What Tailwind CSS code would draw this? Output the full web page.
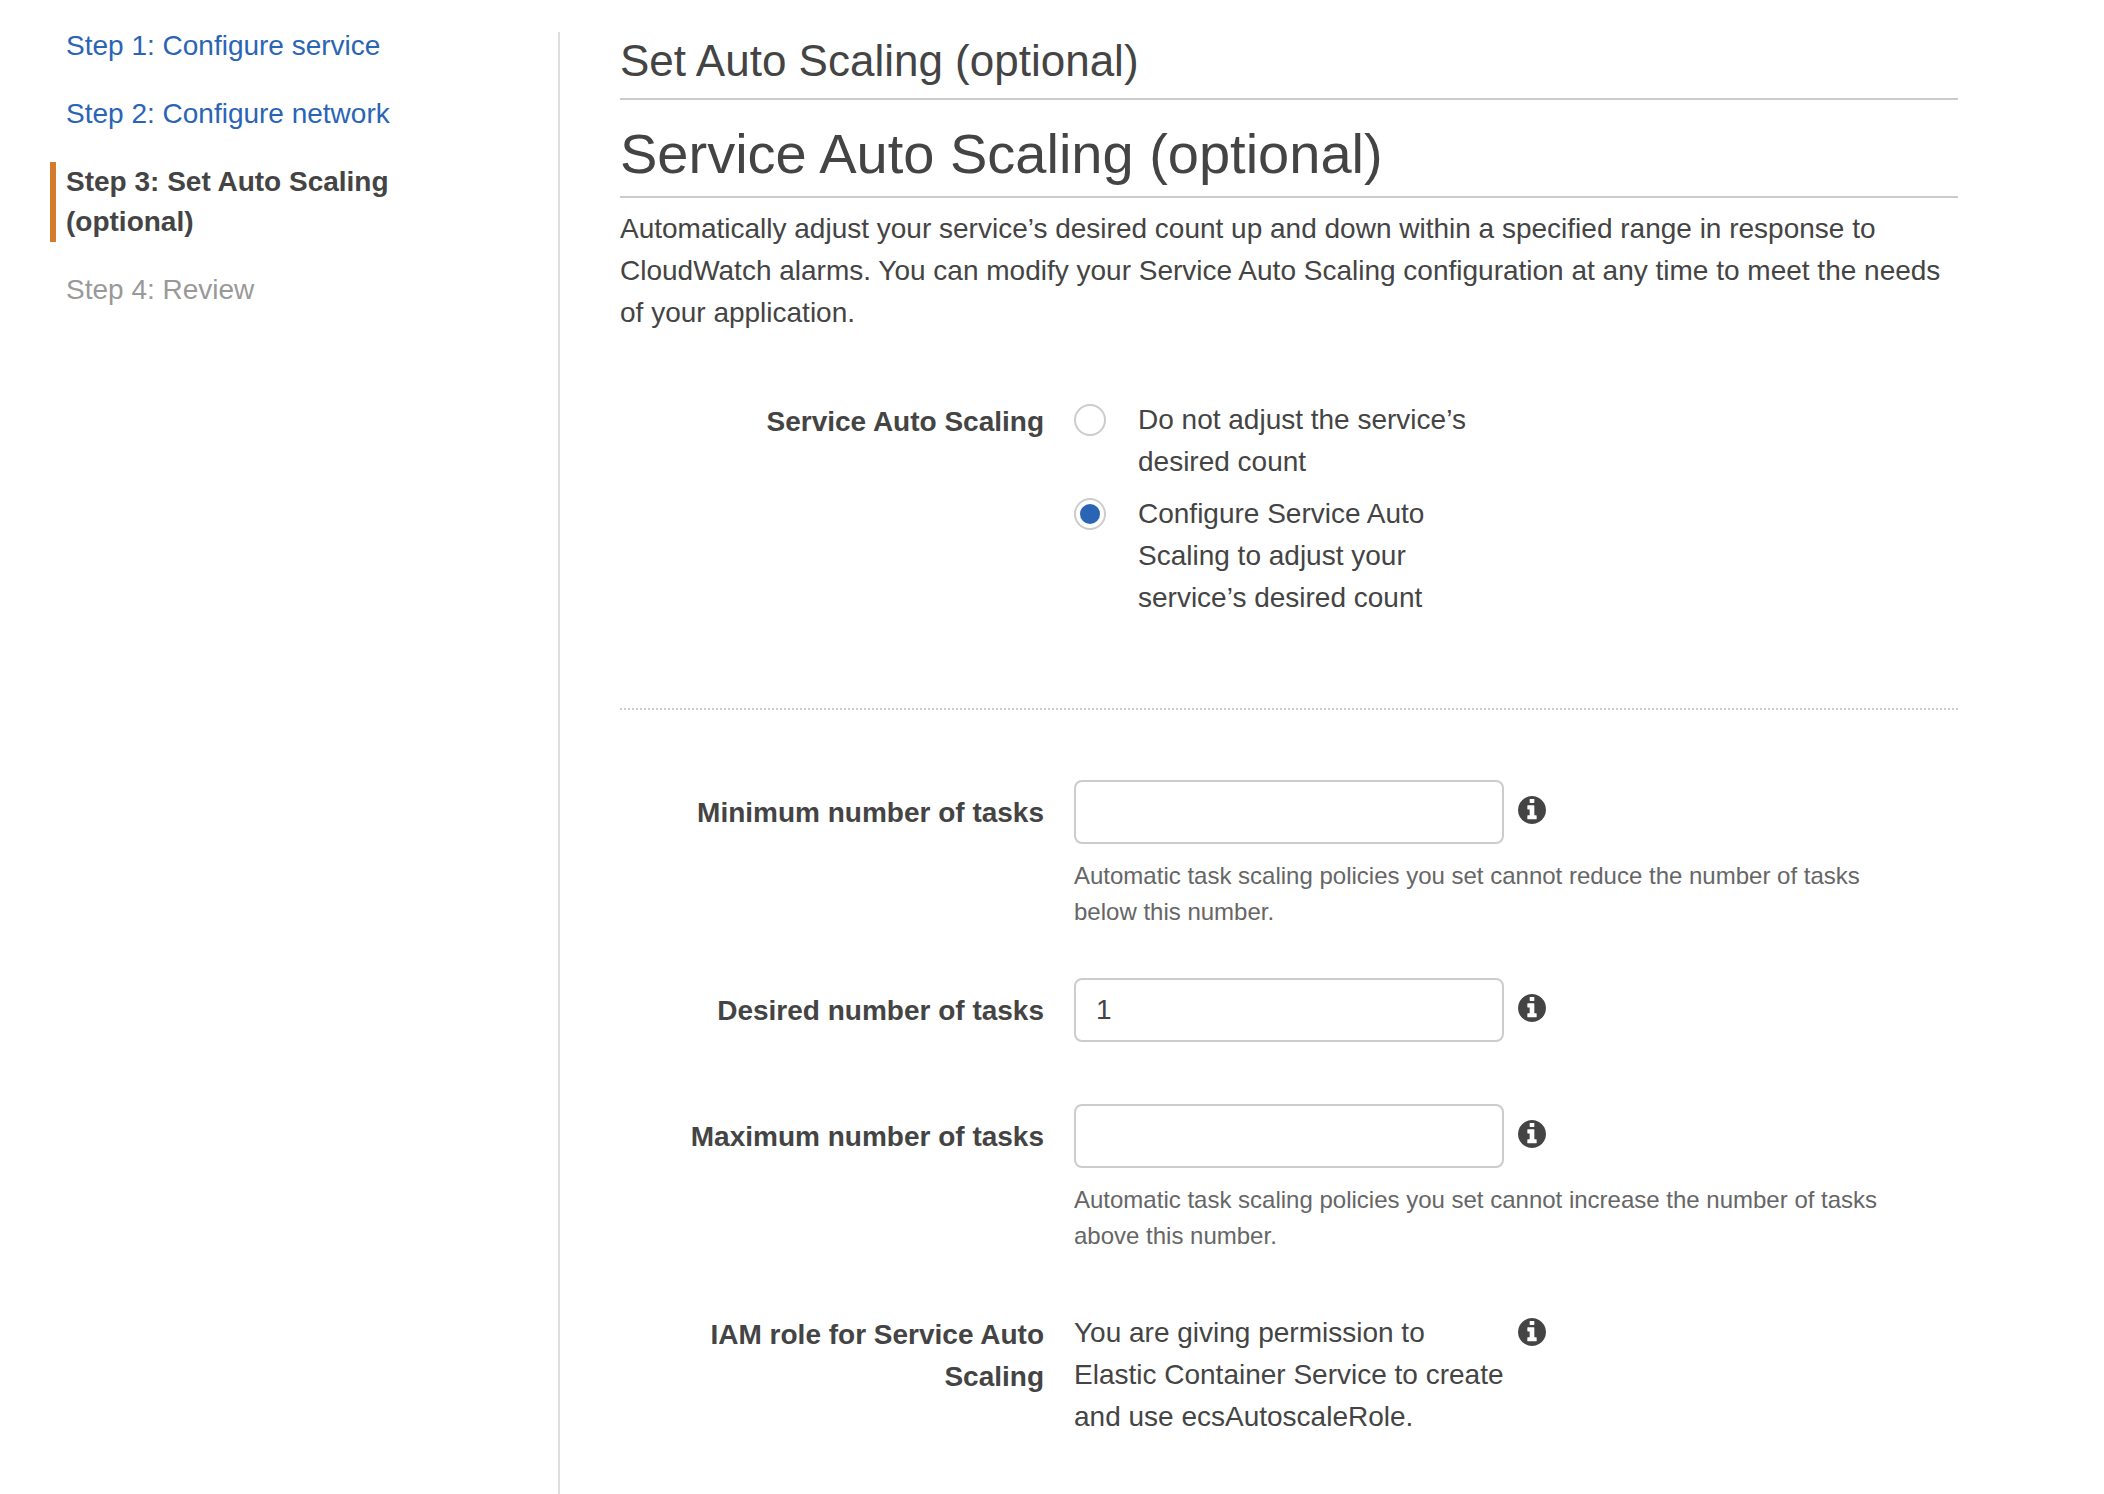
<!DOCTYPE html>
<html lang="en">
<head>
<meta charset="utf-8">
<meta name="viewport" content="width=device-width, initial-scale=1">
<title>Set Auto Scaling (optional)</title>
<script src="https://cdn.jsdelivr.net/npm/@tailwindcss/browser@4"></script>
</head>
<body class="bg-white font-['Helvetica_Neue','Liberation_Sans',Arial,sans-serif] text-[28px] leading-[42px] text-[#444]">
<svg class="hidden" aria-hidden="true">
  <symbol id="info" viewBox="128 128 1536 1536">
    <path fill="currentColor" d="M1152 1376v-160q0-14-9-23t-23-9h-96v-512q0-14-9-23t-23-9h-320q-14 0-23 9t-9 23v160q0 14 9 23t23 9h96v320h-96q-14 0-23 9t-9 23v160q0 14 9 23t23 9h448q14 0 23-9t9-23zM1024 480v-160q0-14-9-23t-23-9h-192q-14 0-23 9t-9 23v160q0 14 9 23t23 9h192q14 0 23-9t9-23zM1664 896q0 209-103 385.5t-279.5 279.5-385.5 103-385.5-103-279.5-279.5-103-385.5 103-385.5 279.5-279.5 385.5-103 385.5 103 279.5 279.5 103 385.5z"/>
  </symbol>
</svg>
<div class="flex min-h-screen pt-8">
  <nav aria-label="Wizard steps" class="-mt-[6px] w-[558px] shrink-0 pl-[50px] pr-[120px] leading-[40px]">
    <ol class="flex flex-col gap-7">
      <li class="pl-4"><a href="#step1" class="text-[#2a65b5]">Step 1: Configure service</a></li>
      <li class="pl-4"><a href="#step2" class="text-[#2a65b5]">Step 2: Configure network</a></li>
      <li class="border-l-6 border-[#d47b2c] pl-[10px] font-bold" aria-current="step">Step 3: Set Auto Scaling (optional)</li>
      <li class="pl-4 text-[#999]">Step 4: Review</li>
    </ol>
  </nav>

  <main class="min-w-0 flex-1 border-l-2 border-[#ddd] pl-[60px] pr-[146px]">
    <h1 class="border-b-2 border-[#ccc] pb-2 text-[44px] leading-[58px]">Set Auto Scaling (optional)</h1>
    <h2 class="mt-[18px] border-b-2 border-[#ccc] pb-[6px] text-[56px] leading-[72px]">Service Auto Scaling (optional)</h2>
    <p class="mt-[10px]">Automatically adjust your service’s desired count up and down within a specified range in response to CloudWatch alarms. You can modify your Service Auto Scaling configuration at any time to meet the needs of your application.</p>

    <form>
      <div role="radiogroup" aria-labelledby="mode" class="mt-[65px] grid grid-cols-[424px_1fr] gap-x-[30px] border-b-2 border-dotted border-[#ccc] pb-[89px]">
        <div id="mode" class="pt-[2px] text-right font-bold">Service Auto Scaling</div>
        <div class="flex w-[430px] flex-col gap-[10px]">
          <label class="flex items-start gap-8">
            <input type="radio" name="scaling" class="mt-[5px] size-8 shrink-0 appearance-none rounded-full border-2 border-[#ccc] bg-white bg-clip-content p-1 checked:bg-[#2a65b5]">
            <span>Do not adjust the service’s desired count</span>
          </label>
          <label class="flex items-start gap-8">
            <input type="radio" name="scaling" checked class="mt-[5px] size-8 shrink-0 appearance-none rounded-full border-2 border-[#ccc] bg-white bg-clip-content p-1 checked:bg-[#2a65b5]">
            <span>Configure Service Auto Scaling to adjust your service’s desired count</span>
          </label>
        </div>
      </div>

      <div class="mt-[70px] flex flex-col gap-12">
        <div class="grid grid-cols-[424px_1fr] gap-x-[30px]">
          <label for="min" class="pt-3 text-right font-bold">Minimum number of tasks</label>
          <div>
            <div class="mb-[14px] flex items-start gap-[14px]">
              <input id="min" type="text" aria-describedby="min-help" class="h-16 w-[430px] rounded-lg border-2 border-[#ccc] px-5">
              <button type="button" aria-label="About minimum number of tasks" class="mt-4"><svg class="size-7"><use href="#info"/></svg></button>
            </div>
            <p id="min-help" class="max-w-[850px] text-[24px] leading-[36px] text-[#666]">Automatic task scaling policies you set cannot reduce the number of tasks below this number.</p>
          </div>
        </div>

        <div class="grid grid-cols-[424px_1fr] gap-x-[30px]">
          <label for="desired" class="pt-3 text-right font-bold">Desired number of tasks</label>
          <div>
            <div class="mb-[14px] flex items-start gap-[14px]">
              <input id="desired" type="text" value="1" class="h-16 w-[430px] rounded-lg border-2 border-[#ccc] px-5">
              <button type="button" aria-label="About desired number of tasks" class="mt-4"><svg class="size-7"><use href="#info"/></svg></button>
            </div>
          </div>
        </div>

        <div class="grid grid-cols-[424px_1fr] gap-x-[30px]">
          <label for="max" class="pt-3 text-right font-bold">Maximum number of tasks</label>
          <div>
            <div class="mb-[14px] flex items-start gap-[14px]">
              <input id="max" type="text" aria-describedby="max-help" class="h-16 w-[430px] rounded-lg border-2 border-[#ccc] px-5">
              <button type="button" aria-label="About maximum number of tasks" class="mt-4"><svg class="size-7"><use href="#info"/></svg></button>
            </div>
            <p id="max-help" class="max-w-[850px] text-[24px] leading-[36px] text-[#666]">Automatic task scaling policies you set cannot increase the number of tasks above this number.</p>
          </div>
        </div>

        <div class="grid grid-cols-[424px_1fr] gap-x-[30px]">
          <div class="pl-10 pt-3 text-right font-bold">IAM role for Service Auto Scaling</div>
          <div class="flex items-start gap-[14px]">
            <p class="w-[430px] pt-[10px]">You are giving permission to<br><span class="whitespace-nowrap">Elastic Container Service to create</span><br>and use ecsAutoscaleRole.</p>
            <button type="button" aria-label="About the IAM role" class="mt-4"><svg class="size-7"><use href="#info"/></svg></button>
          </div>
        </div>
      </div>
    </form>
  </main>
</div>
</body>
</html>
